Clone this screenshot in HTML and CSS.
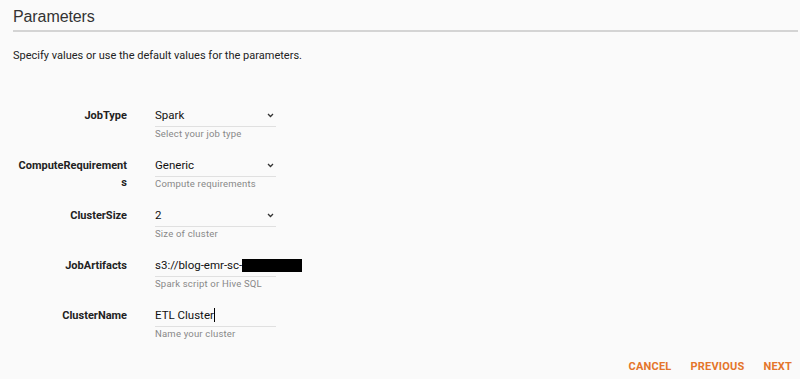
FILE: index.html
```html
<!DOCTYPE html>
<html lang="en">

<head>
    <meta charset="UTF-8">
    <meta name="viewport" content="width=device-width, initial-scale=1.0">
    <title>Parameters</title>
    <link rel="stylesheet" href="styles.css">
</head>

<body>
    <!-- 参数页 -->
    <div class="page">
        <h2 class="title">Parameters</h2>
        <p class="desc">Specify values or use the default values for the parameters.</p>

        <div class="form">
            <div class="row">
                <label class="label">JobType</label>
                <div class="field">
                    <div class="input">
                        <span>Spark</span>
                        <svg class="chev" width="7" height="5" viewBox="0 0 7 5"><path d="M1 1 L3.5 3.5 L6 1" fill="none" stroke="#333" stroke-width="1.3"/></svg>
                    </div>
                    <div class="help">Select your job type</div>
                </div>
            </div>
            <div class="row">
                <label class="label">ComputeRequirements</label>
                <div class="field">
                    <div class="input">
                        <span>Generic</span>
                        <svg class="chev" width="7" height="5" viewBox="0 0 7 5"><path d="M1 1 L3.5 3.5 L6 1" fill="none" stroke="#333" stroke-width="1.3"/></svg>
                    </div>
                    <div class="help">Compute requirements</div>
                </div>
            </div>
            <div class="row">
                <label class="label">ClusterSize</label>
                <div class="field">
                    <div class="input">
                        <span>2</span>
                        <svg class="chev" width="7" height="5" viewBox="0 0 7 5"><path d="M1 1 L3.5 3.5 L6 1" fill="none" stroke="#333" stroke-width="1.3"/></svg>
                    </div>
                    <div class="help">Size of cluster</div>
                </div>
            </div>
            <div class="row">
                <label class="label">JobArtifacts</label>
                <div class="field">
                    <div class="input">
                        <span class="nowrap">s3://blog-emr-sc-</span><span class="redact"></span>
                    </div>
                    <div class="help">Spark script or Hive SQL</div>
                </div>
            </div>
            <div class="row">
                <label class="label">ClusterName</label>
                <div class="field">
                    <div class="input">
                        <span>ETL Cluster</span><span class="caret"></span>
                    </div>
                    <div class="help">Name your cluster</div>
                </div>
            </div>
        </div>

        <div class="actions">
            <button class="btn">CANCEL</button>
            <button class="btn">PREVIOUS</button>
            <button class="btn">NEXT</button>
        </div>
    </div>
</body>

</html>
```

FILE: styles.css
```css
/* 参数页的CSS */
body {
    margin: 0;
    background-color: #fafafa;
    font-family: Roboto, "Liberation Sans", sans-serif;
    color: #222;
}

.page {
    padding: 0 2px 0 13px;
}

.title {
    margin: 0;
    padding-top: 8px;
    height: 22px;
    font-family: "Liberation Sans", Arial, sans-serif;
    font-size: 16px;
    font-weight: normal;
    letter-spacing: -0.1px;
    color: #333;
    border-bottom: 2px solid #d4d4d4;
}

.desc {
    margin: 0;
    padding-top: 17px;
    font-size: 11px;
    color: #222;
}

.form {
    margin-top: 42px;
}

.row {
    display: flex;
    gap: 28px;
    height: 50px;
}

.label {
    width: 114px;
    text-align: right;
    font-size: 11px;
    font-weight: bold;
    line-height: 17px;
    padding-top: 3px;
    word-break: break-all;
    color: #222;
}

.field {
    width: 121px;
}

.input {
    display: flex;
    align-items: center;
    height: 22px;
    border-bottom: 1px solid #e0e0e0;
    font-size: 11.5px;
    color: #111;
    white-space: nowrap;
}

.chev {
    margin-left: auto;
    margin-right: 2px;
}

.redact {
    display: inline-block;
    flex: none;
    width: 60px;
    height: 13px;
    background-color: #000;
}

.caret {
    display: inline-block;
    width: 1px;
    height: 14px;
    background-color: #000;
}

.help {
    padding-top: 1px;
    font-size: 9.5px;
    color: #888;
    letter-spacing: 0.2px;
}

.actions {
    display: flex;
    justify-content: flex-end;
    gap: 19px;
    margin-top: 6px;
    padding-right: 6px;
}

.btn {
    background: none;
    border: none;
    padding: 0;
    font-family: Roboto, "Liberation Sans", sans-serif;
    font-size: 11px;
    font-weight: bold;
    letter-spacing: 0.2px;
    color: #e4752b;
    cursor: pointer;
}
```
